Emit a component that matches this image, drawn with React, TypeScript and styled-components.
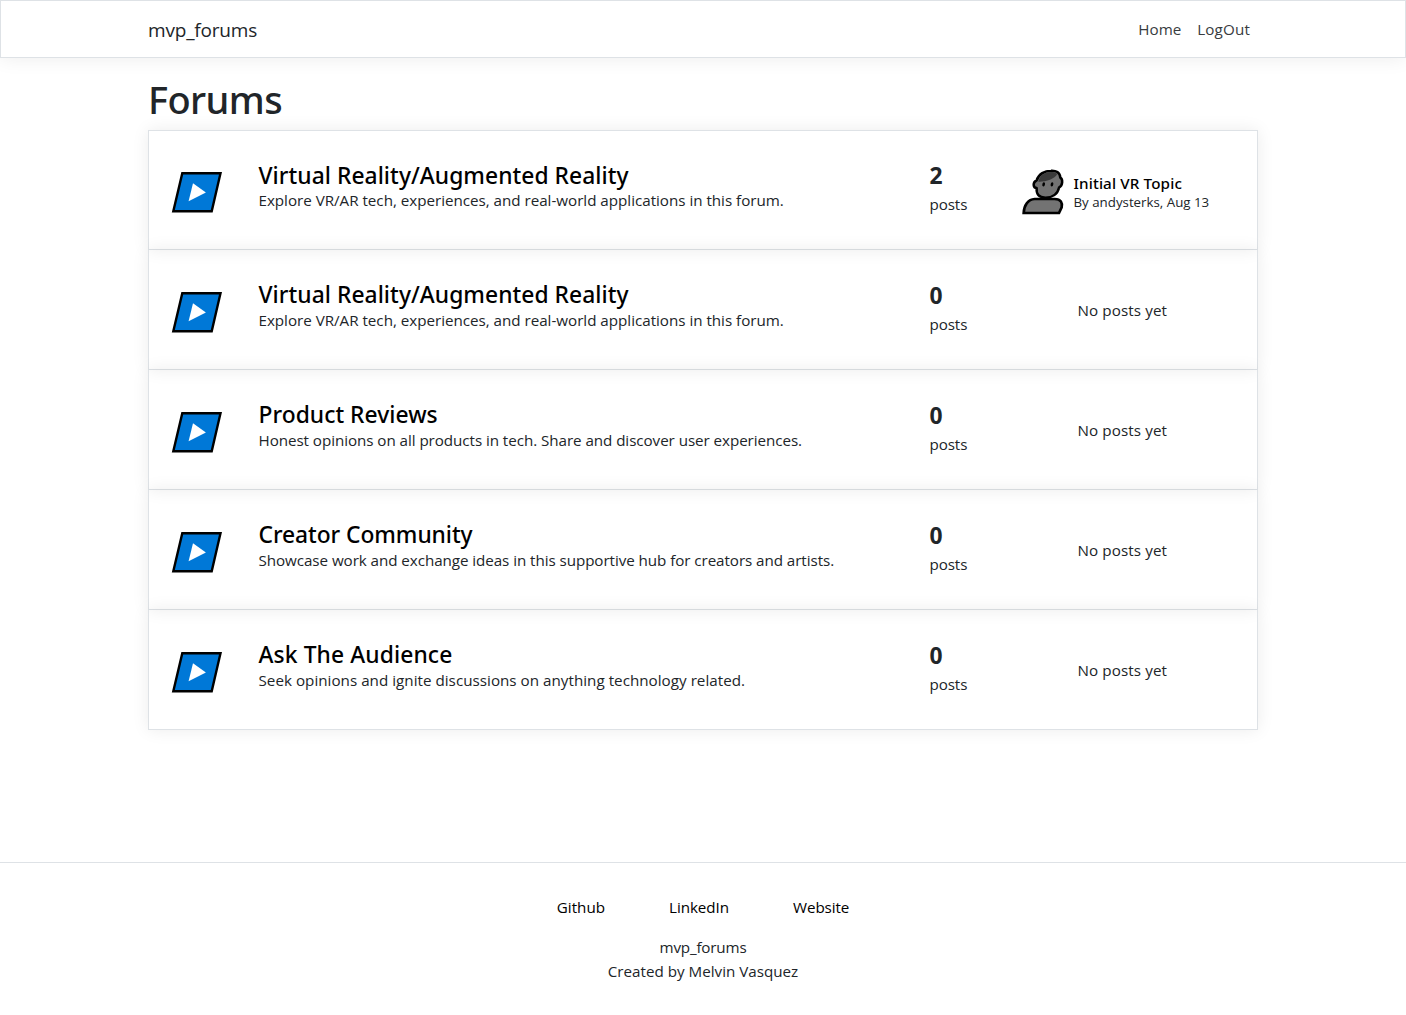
import React from "react";
import styled, { createGlobalStyle } from "styled-components";

const GlobalStyle = createGlobalStyle`
  *, *::before, *::after { box-sizing: border-box; }
  body {
    margin: 0;
    background: #fff;
    color: #212529;
    font: 400 15.2px/24px "Open Sans", "Noto Sans", sans-serif;
  }
  h1, h2, p { margin: 0; }
  a { color: inherit; text-decoration: none; }
`;

const Page = styled.div`
  min-height: 1015px;
  display: flex;
  flex-direction: column;
`;

const Header = styled.header`
  height: 58px;
  border: 1px solid #dee2e6;
  box-shadow: 0 0 20px rgba(0, 0, 0, 0.08);
`;

const Container = styled.div`
  width: 1140px;
  margin: 0 auto;
  padding: 0 15px;
`;

const NavBar = styled(Container)`
  height: 56px;
  display: flex;
  align-items: center;
  justify-content: space-between;
`;

const Brand = styled.a`
  font-size: 19px;
  line-height: 30px;
  letter-spacing: -0.19px;
  padding-top: 2px;
`;

const NavLinks = styled.nav`
  display: flex;
  gap: 16px;
  padding-right: 8px;
`;

const Text = styled.span<{ $tracking?: number }>`
  letter-spacing: ${(p) => p.$tracking ?? 0}px;
`;

const NavLink = styled(Text)`
  color: #383c40;
`;

const Main = styled.main`
  flex: 1;
  padding-top: 17px;
`;

const PageTitle = styled.h1`
  font: 500 38px/48px "Noto Sans", sans-serif;
  letter-spacing: -0.6px;
  margin-bottom: 7px;
`;

const ForumList = styled.div`
  display: flex;
  flex-direction: column;
`;

const ForumTitle = styled.h2<{ $tracking?: number }>`
  font: 500 22.8px/27px "Noto Sans", sans-serif;
  letter-spacing: ${(p) => p.$tracking ?? 0}px;
  color: #000;
`;

const ForumRow = styled.article`
  height: 120px;
  display: grid;
  grid-template-columns: 109.5px 671px 90px 1fr;
  padding-top: 31px;
  border: 1px solid #dee2e6;
  border-top: 0;
  box-shadow: 0 0 16px rgba(0, 0, 0, 0.08);
  &:first-child {
    border-top: 1px solid #dee2e6;
    padding-top: 30px;
  }
  &:first-child ${ForumTitle} {
    padding-top: 2px;
    line-height: 25px;
  }
`;

const IconCell = styled.div`
  padding: 10px 0 0 22px;
`;

const ForumSvg = styled.svg`
  display: block;
`;

const Description = styled.p<{ $tracking?: number }>`
  letter-spacing: ${(p) => p.$tracking ?? 0}px;
`;

const PostCount = styled.div`
  font-size: 22.8px;
  font-weight: 700;
  line-height: 29px;
  margin-bottom: 2px;
`;

const Latest = styled.div`
  display: flex;
  gap: 9px;
  padding-top: 7px;
`;

const TopicInfo = styled.div`
  padding-top: 6px;
`;

const TopicTitle = styled.div`
  font: 500 15.2px/18px "Noto Sans", sans-serif;
  letter-spacing: 0.14px;
  color: #000;
`;

const Byline = styled.div`
  font-size: 13.3px;
  line-height: 21px;
`;

const NoPosts = styled.div`
  padding: 17px 0 0 58px;
  letter-spacing: 0.1px;
`;

const Footer = styled.footer`
  height: 153px;
  border-top: 1px solid #dee2e6;
  padding-top: 32px;
  text-align: center;
`;

const FooterLinks = styled.nav`
  display: flex;
  justify-content: center;
  gap: 64px;
  margin-bottom: 16px;
  color: #000;
`;

const ForumIcon = () => (
  <ForumSvg width="52" height="42" viewBox="0 0 52 42">
    <path d="M11.3 2.3H49.5L40.7 40.2H2.3Z" fill="#0078d7" stroke="#000" strokeWidth="2.4" />
    <path d="M22 12.3L34.9 21.4L17.6 30.3Z" fill="#fff" />
  </ForumSvg>
);

const Avatar = () => (
  <svg width="45" height="49" viewBox="30 24 135 147">
    <path
      d="M41 159C42 136 54 118 74 117H134C153 117 158 128 155 142L147 159Z"
      fill="#737373"
      stroke="#000"
      strokeWidth="8"
    />
    <path
      d="M80 84C69 84 67 67 80 61C86 42 104 32 123 32C138 31 150 37 151 53C159 58 159 76 147 83C143 102 127 113 106 113C87 112 78 103 80 84Z"
      fill="#737373"
      stroke="#000"
      strokeWidth="7.5"
      strokeLinejoin="round"
    />
    <path d="M85 65C89 46 105 36 123 36C131 35 138 37 142 42C134 57 106 66 85 65Z" fill="#3a3a3a" />
    <ellipse cx="101" cy="73" rx="4" ry="6.5" transform="rotate(12 101 73)" />
    <ellipse cx="126" cy="73" rx="4" ry="6.5" transform="rotate(12 126 73)" />
  </svg>
);

interface Forum {
  title: string;
  titleTracking: number;
  description: string;
  tracking: number;
  posts: number;
  latest?: { topic: string; byline: string };
}

const vr = {
  title: "Virtual Reality/Augmented Reality",
  titleTracking: 0.06,
  description: "Explore VR/AR tech, experiences, and real-world applications in this forum.",
  tracking: -0.02,
};

const forums: Forum[] = [
  { ...vr, posts: 2, latest: { topic: "Initial VR Topic", byline: "By andysterks, Aug 13" } },
  { ...vr, posts: 0 },
  {
    title: "Product Reviews",
    titleTracking: 0.04,
    description: "Honest opinions on all products in tech. Share and discover user experiences.",
    tracking: -0.06,
    posts: 0,
  },
  {
    title: "Creator Community",
    titleTracking: -0.06,
    description: "Showcase work and exchange ideas in this supportive hub for creators and artists.",
    tracking: -0.065,
    posts: 0,
  },
  {
    title: "Ask The Audience",
    titleTracking: 0.12,
    description: "Seek opinions and ignite discussions on anything technology related.",
    tracking: 0.02,
    posts: 0,
  },
];

export default function App() {
  return (
    <Page>
      <GlobalStyle />
      <Header>
        <NavBar>
          <Brand>mvp_forums</Brand>
          <NavLinks>
            <NavLink>Home</NavLink>
            <NavLink $tracking={0.15}>LogOut</NavLink>
          </NavLinks>
        </NavBar>
      </Header>
      <Main>
        <Container>
          <PageTitle>Forums</PageTitle>
          <ForumList>
            {forums.map((forum, i) => (
              <ForumRow key={i}>
                <IconCell>
                  <ForumIcon />
                </IconCell>
                <div>
                  <ForumTitle $tracking={forum.titleTracking}>{forum.title}</ForumTitle>
                  <Description $tracking={forum.tracking}>{forum.description}</Description>
                </div>
                <div>
                  <PostCount>{forum.posts}</PostCount>
                  <Text $tracking={-0.1}>posts</Text>
                </div>
                {forum.latest ? (
                  <Latest>
                    <Avatar />
                    <TopicInfo>
                      <TopicTitle>{forum.latest.topic}</TopicTitle>
                      <Byline>{forum.latest.byline}</Byline>
                    </TopicInfo>
                  </Latest>
                ) : (
                  <NoPosts>No posts yet</NoPosts>
                )}
              </ForumRow>
            ))}
          </ForumList>
        </Container>
      </Main>
      <Footer>
        <FooterLinks>
          <Text>Github</Text>
          <Text $tracking={-0.05}>LinkedIn</Text>
          <Text $tracking={-0.1}>Website</Text>
        </FooterLinks>
        <Text as="p" $tracking={-0.17}>mvp_forums</Text>
        <p>Created by Melvin Vasquez</p>
      </Footer>
    </Page>
  );
}
